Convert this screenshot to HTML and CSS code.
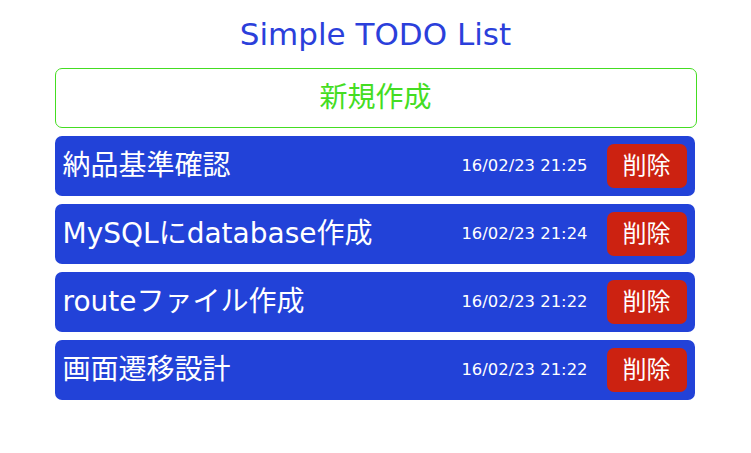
FILE: index.html
```html
<!DOCTYPE html>
<html lang="ja">
<head>
<meta charset="utf-8">
<title>Simple TODO List</title>
<link rel="stylesheet" href="styles.css">
</head>
<body>
<div class="app">
  <h1 class="title">Simple TODO List</h1>
  <button class="new-btn">新規作成</button>
  <ul class="list">
    <li class="item">
      <span class="item-text">納品基準確認</span>
      <span class="item-date">16/02/23 21:25</span>
      <button class="del-btn">削除</button>
    </li>
    <li class="item">
      <span class="item-text">MySQLにdatabase作成</span>
      <span class="item-date">16/02/23 21:24</span>
      <button class="del-btn">削除</button>
    </li>
    <li class="item">
      <span class="item-text">routeファイル作成</span>
      <span class="item-date">16/02/23 21:22</span>
      <button class="del-btn">削除</button>
    </li>
    <li class="item">
      <span class="item-text">画面遷移設計</span>
      <span class="item-date">16/02/23 21:22</span>
      <button class="del-btn">削除</button>
    </li>
  </ul>
</div>
</body>
</html>
```

FILE: styles.css
```css
html, body {
  margin: 0;
  padding: 0;
  background: #ffffff;
}
body {
  font-family: "DejaVu Sans", "Noto Sans CJK JP", sans-serif;
}
.app {
  width: 642px;
  margin: 0 auto;
  padding-top: 16px;
}
.title {
  margin: 0 0 15px 0;
  text-align: center;
  font-weight: normal;
  font-size: 31px;
  line-height: 37px;
  color: #2b3fdb;
}
.new-btn {
  display: block;
  width: 642px;
  height: 60px;
  box-sizing: border-box;
  border: 1px solid #44dd22;
  border-radius: 7px;
  background: #ffffff;
  color: #44dd22;
  font-family: "DejaVu Sans", "Noto Sans CJK JP", sans-serif;
  font-size: 28px;
  line-height: 1;
  padding: 0 0 1px 0;
  margin: 0 0 8px 0;
}
.list {
  list-style: none;
  margin: 0;
  padding: 0;
  display: flex;
  flex-direction: column;
  gap: 8px;
}
.item {
  width: 640px;
  height: 60px;
  box-sizing: border-box;
  background: #2242d8;
  border-radius: 7px;
  display: flex;
  align-items: center;
  padding: 0 8px;
  color: #ffffff;
}
.item-text {
  flex: 1;
  font-size: 28px;
  line-height: 1;
  padding-bottom: 1px;
}
.item-date {
  font-size: 16.4px;
  margin-right: 19px;
  padding-bottom: 2px;
}
.del-btn {
  width: 80px;
  height: 44px;
  border: none;
  border-radius: 7px;
  background: #cc2211;
  color: #ffffff;
  font-family: "DejaVu Sans", "Noto Sans CJK JP", sans-serif;
  font-size: 24px;
  font-weight: normal;
  line-height: 1;
  padding: 0 0 1px 0;
}
```
